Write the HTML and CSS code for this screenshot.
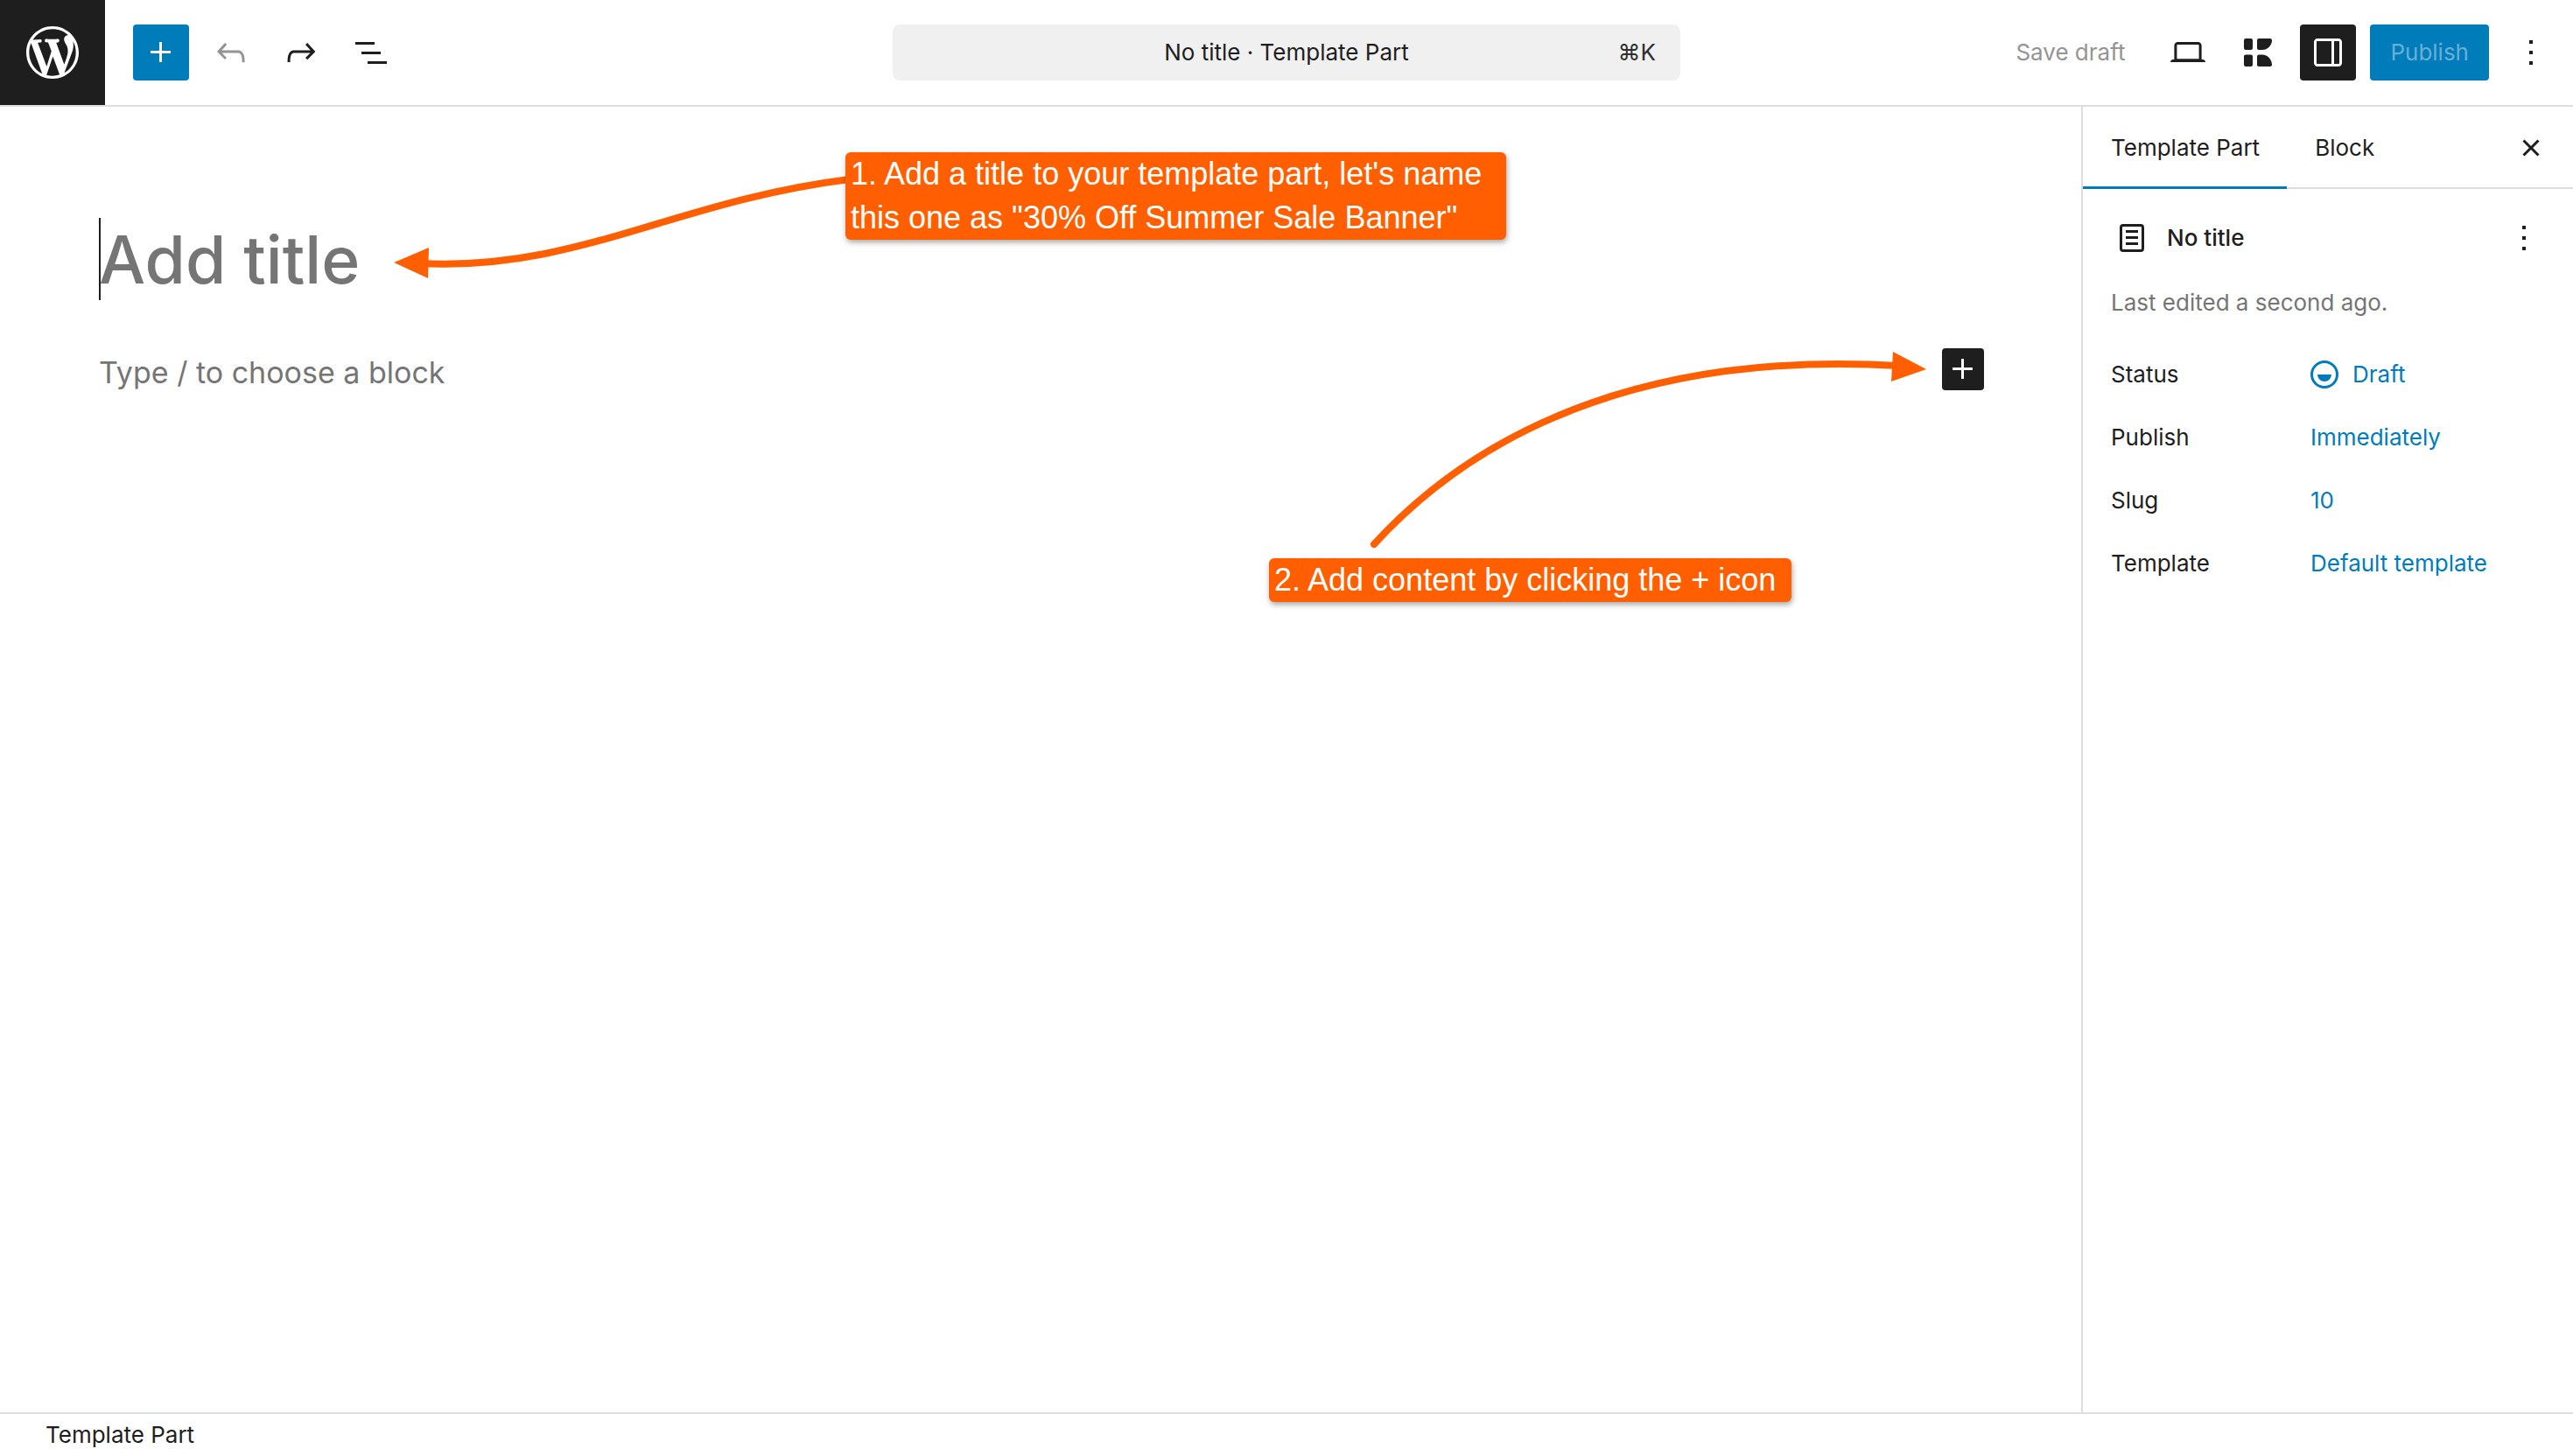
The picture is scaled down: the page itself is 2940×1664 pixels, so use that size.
FILE: index.html
```html
<!DOCTYPE html>
<html lang="en">
<head>
<meta charset="utf-8">
<title>No title · Template Part</title>
<link rel="stylesheet" href="styles.css">
</head>
<body>
<div class="editor">
  <header class="header">
    <div class="tools">
      <a class="logo" href="#" aria-label="View template parts">
        <svg class="logo-icon" viewBox="-2 -2 24 24"><path d="M20 10c0-5.51-4.49-10-10-10C4.48 0 0 4.49 0 10c0 5.52 4.48 10 10 10 5.51 0 10-4.48 10-10zM7.78 15.37L4.37 6.22c.55-.02 1.17-.08 1.17-.08.5-.06.44-1.13-.06-1.11 0 0-1.45.11-2.37.11-.18 0-.37 0-.58-.01C4.12 2.69 6.87 1.11 10 1.11c2.33 0 4.45.87 6.05 2.34-.68-.11-1.65.39-1.65 1.58 0 .74.45 1.36.9 2.1.35.61.55 1.36.55 2.46 0 1.49-1.4 5-1.4 5l-3.03-8.37c.54-.02.82-.17.82-.17.5-.05.44-1.25-.06-1.22 0 0-1.44.12-2.38.12-.87 0-2.33-.12-2.33-.12-.5-.03-.56 1.2-.06 1.22l.92.08 1.26 3.41zM17.41 10c.24-.64.74-1.87.43-4.25.7 1.29 1.05 2.71 1.05 4.25 0 3.29-1.73 6.24-4.4 7.78.97-2.59 1.94-5.2 2.92-7.78zM6.1 18.09C3.12 16.65 1.11 13.53 1.11 10c0-1.3.23-2.48.72-3.59C3.25 10.3 4.67 14.2 6.1 18.09zm4.03-6.63l2.58 6.98c-.86.29-1.76.45-2.71.45-.79 0-1.57-.11-2.29-.33.81-2.38 1.62-4.74 2.42-7.1z"/></svg>
      </a>
      <button class="icon-button primary" aria-label="Add block"><svg class="icon" viewBox="0 0 24 24"><path d="M11 12.5V17.5H12.5V12.5H17.5V11H12.5V6H11V11H6V12.5H11Z"/></svg></button>
      <button class="icon-button muted" aria-label="Undo"><svg class="icon" viewBox="0 0 24 24"><path d="M18.3 11.7c-.6-.6-1.4-.9-2.3-.9H6.7l2.9-3.3-1.1-1-4.5 5L8.5 16l1-1-2.7-2.7H16c.5 0 .9.2 1.3.5 1 1 1 3.4 1 4.5v.3h1.5v-.2c0-1.5 0-4.3-1.5-5.7z"/></svg></button>
      <button class="icon-button" aria-label="Redo"><svg class="icon" viewBox="0 0 24 24"><path d="M15.6 6.5l-1.1 1 2.9 3.3H8c-.9 0-1.7.3-2.3.9-1.4 1.5-1.4 4.2-1.4 5.6v.2h1.5v-.3c0-1.1 0-3.5 1-4.5.3-.3.7-.5 1.3-.5h9.2L14.5 15l1.1 1.1 4.6-4.6-4.6-5z"/></svg></button>
      <button class="icon-button" aria-label="Document overview"><svg class="icon" viewBox="0 0 24 24"><path d="M3 6h11v1.5H3V6Zm3.5 5.5h11V13h-11v-1.5ZM21 17H10v1.5h11V17Z"/></svg></button>
    </div>
    <button class="document-bar">
      <span class="document-name">No title · Template Part</span>
      <span class="shortcut">⌘K</span>
    </button>
    <div class="actions">
      <button class="text-button">Save draft</button>
      <button class="icon-button" aria-label="View"><svg class="icon" viewBox="0 0 24 24"><path d="M20.5 16h-.7V8c0-1.1-.9-2-2-2H6.2c-1.1 0-2 .9-2 2v8h-.7c-.8 0-1.5.7-1.5 1.5h20c0-.8-.7-1.5-1.5-1.5zM5.7 8c0-.3.2-.5.5-.5h11.6c.3 0 .5.2.5.5v7.6H5.7V8z"/></svg></button>
      <button class="icon-button" aria-label="Kadence blocks"><svg class="icon" viewBox="0 0 48 48"><path d="M10 8h6a2 2 0 0 1 2 2v9a2 2 0 0 1-2 2h-6a2 2 0 0 1-2-2v-9a2 2 0 0 1 2-2zM10 26.500h6a2 2 0 0 1 2 2V38a2 2 0 0 1-2 2h-6a2 2 0 0 1-2-2v-9.500a2 2 0 0 1 2-2zM25 8h13a2 2 0 0 1 2 2c0 6-5 11-11 11h-4a2 2 0 0 1-2-2v-9a2 2 0 0 1 2-2zM25 26.500h4c6 0 11 5.500 11 11.500a2 2 0 0 1-2 2H25a2 2 0 0 1-2-2v-9.500a2 2 0 0 1 2-2z"/></svg></button>
      <button class="icon-button pressed" aria-label="Settings"><svg class="icon" viewBox="0 0 24 24"><path d="M18 4H6c-1.1 0-2 .9-2 2v12c0 1.1.9 2 2 2h12c1.1 0 2-.9 2-2V6c0-1.1-.9-2-2-2zm-4 14.5H6c-.3 0-.5-.2-.5-.5V6c0-.3.2-.5.5-.5h8v13zm4.500-.5c0 .3-.2.5-.5.5h-2.500v-13H18c.3 0 .5.2.5.5v12z"/></svg></button>
      <button class="publish">Publish</button>
      <button class="icon-button" aria-label="Options"><svg class="icon" viewBox="0 0 24 24"><path d="M13 19h-2v-2h2v2zm0-6h-2v-2h2v2zm0-6h-2V5h2v2z"/></svg></button>
    </div>
  </header>

  <div class="body">
    <main class="canvas">
      <div class="title-field">
        <input class="title-input" type="text" placeholder="Add title" aria-label="Add title">
      </div>
      <div class="block-row">
        <input class="block-input" type="text" placeholder="Type / to choose a block" aria-label="Empty block">
        <button class="inserter" aria-label="Add block"><svg class="icon" viewBox="0 0 24 24"><path d="M11 12.5V17.5H12.5V12.5H17.5V11H12.5V6H11V11H6V12.5H11Z"/></svg></button>
      </div>
      <svg class="arrows" aria-hidden="true">
        <path class="arrow-line" d="M480 179C660 188 770 108 970 83"/>
        <path class="arrow-head" d="M450 178L490 161L489 196Z"/>
        <path class="arrow-line" d="M1570 500C1700 358 1900 280 2170 296"/>
        <path class="arrow-head" d="M2201 300L2163 280L2161 314Z"/>
      </svg>
      <p class="note note-title">1. Add a title to your template part, let's name<br>this one as "30% Off Summer Sale Banner"</p>
      <p class="note note-content">2. Add content by clicking the + icon</p>
    </main>

    <aside class="sidebar">
      <div class="tabs">
        <div class="tab-list" role="tablist">
          <button class="tab active" role="tab" aria-selected="true">Template Part</button>
          <button class="tab" role="tab" aria-selected="false">Block</button>
        </div>
        <button class="icon-button" aria-label="Close settings"><svg class="icon" viewBox="0 0 24 24"><path d="M12 13.06l3.712 3.713 1.061-1.06L13.061 12l3.712-3.712-1.06-1.06L12 10.938 8.288 7.227l-1.061 1.06L10.939 12l-3.712 3.712 1.06 1.061L12 13.061z"/></svg></button>
      </div>
      <section class="summary">
        <div class="card">
          <svg class="icon" viewBox="0 0 24 24"><path d="M15.500 7.500h-7V9h7V7.500Zm-7 3.500h7v1.500h-7V11Zm7 3.500h-7V16h7v-1.500Z"/><path fill-rule="evenodd" d="M17 4H7a2 2 0 0 0-2 2v12a2 2 0 0 0 2 2h10a2 2 0 0 0 2-2V6a2 2 0 0 0-2-2ZM7 5.500h10a.5.5 0 0 1 .5.5v12a.5.5 0 0 1-.5.5H7a.5.5 0 0 1-.5-.5V6a.5.5 0 0 1 .5-.5Z"/></svg>
          <h2 class="card-title">No title</h2>
          <button class="card-more" aria-label="Actions"><svg class="icon" viewBox="0 0 24 24"><path d="M13 19h-2v-2h2v2zm0-6h-2v-2h2v2zm0-6h-2V5h2v2z"/></svg></button>
        </div>
        <p class="edited">Last edited a second ago.</p>
        <dl class="fields">
          <div class="field"><dt>Status</dt><dd><button class="value"><svg class="status-icon" viewBox="0 0 32 32"><circle cx="16" cy="16" r="14.500" fill="none" stroke="currentColor" stroke-width="3"/><path d="M8 16h16a8 8 0 0 1-16 0z"/></svg>Draft</button></dd></div>
          <div class="field"><dt>Publish</dt><dd><button class="value">Immediately</button></dd></div>
          <div class="field"><dt>Slug</dt><dd><button class="value">10</button></dd></div>
          <div class="field"><dt>Template</dt><dd><button class="value">Default template</button></dd></div>
        </dl>
      </section>
    </aside>
  </div>

  <footer class="footer">Template Part</footer>
</div>
</body>
</html>
```

FILE: styles.css
```css
* { box-sizing: border-box; }

body {
  margin: 0;
  background: #fff;
  color: #1e1e1e;
  font-family: Inter, "Liberation Sans", sans-serif;
  font-size: 26px;
  line-height: 36px;
}

button, input {
  margin: 0;
  padding: 0;
  border: 0;
  background: none;
  color: inherit;
  font: inherit;
}

h2, p, dl, dd { margin: 0; }

.editor {
  display: flex;
  flex-direction: column;
  min-height: 100vh;
}

.icon {
  display: block;
  width: 48px;
  height: 48px;
  fill: currentColor;
}

/* Top bar */
.header {
  display: grid;
  grid-template-columns: 1fr 900px 1fr;
  align-items: center;
  border-bottom: 2px solid #ddd;
}

.tools {
  display: flex;
  align-items: center;
  gap: 16px;
}

.logo {
  display: flex;
  align-items: center;
  justify-content: center;
  width: 120px;
  height: 120px;
  margin-right: 16px;
  background: #1e1e1e;
}

.logo-icon {
  width: 72px;
  height: 72px;
  fill: #fff;
}

.icon-button {
  display: flex;
  align-items: center;
  justify-content: center;
  flex: none;
  width: 64px;
  height: 64px;
  border-radius: 4px;
}

.primary { background: #007cba; color: #fff; }
.muted { color: #949494; }
.pressed { background: #1e1e1e; color: #fff; }

.document-bar {
  display: grid;
  grid-template-columns: 1fr auto 1fr;
  align-items: center;
  height: 64px;
  padding: 0 28px;
  border-radius: 8px;
  background: #f0f0f0;
}

.document-name { grid-column: 2; }
.shortcut { text-align: right; color: #2f2f2f; }

.actions {
  display: flex;
  align-items: center;
  justify-content: flex-end;
  gap: 16px;
  padding-right: 16px;
}

.text-button {
  padding: 0 24px;
  color: #949494;
}

.publish {
  height: 64px;
  padding: 0 23px;
  border-radius: 4px;
  background: #007cba;
  color: #66b0d6;
}

/* Editing area */
.body {
  display: flex;
  flex: 1;
}

.canvas {
  position: relative;
  flex: 1;
  padding: 127px 111px 0 113px;
}

/* The inset shadow is the resting text cursor */
.title-field {
  height: 94px;
  box-shadow: inset 2px 0 #1e1e1e;
}

.title-input {
  width: 100%;
  height: 100%;
  font-size: 75px;
  font-weight: 500;
  line-height: 94px;
}

.title-input::placeholder,
.block-input::placeholder {
  color: #757575;
  opacity: 1;
}

.block-row {
  display: flex;
  align-items: flex-start;
  margin-top: 55px;
}

.block-input {
  flex: 1;
  height: 54px;
  font-size: 34px;
}

.inserter {
  border-radius: 4px;
  background: #1e1e1e;
  color: #fff;
}

/* Callouts over the canvas */
.arrows {
  position: absolute;
  top: 0;
  left: 0;
  width: 100%;
  height: 100%;
  pointer-events: none;
}

.arrow-line {
  fill: none;
  stroke: #ff5f00;
  stroke-width: 8px;
  stroke-linecap: round;
}

.arrow-head { fill: #ff5f00; }

.note {
  position: absolute;
  padding: 0 6px;
  border-radius: 6px;
  background: #ff5f00;
  box-shadow: 1px 3px 6px rgba(0, 0, 0, 0.35);
  color: #fff;
  font-family: "Liberation Sans", Arial, sans-serif;
  font-size: 36px;
  line-height: 50px;
  white-space: nowrap;
}

.note-title { top: 52px; left: 966px; width: 755px; }
.note-content { top: 516px; left: 1450px; width: 597px; }

/* Settings sidebar */
.sidebar {
  width: 562px;
  border-left: 2px solid #ddd;
}

.tabs {
  display: flex;
  align-items: center;
  justify-content: space-between;
  height: 94px;
  padding-right: 16px;
  box-shadow: inset 0 -2px #ddd;
}

.tab-list {
  display: flex;
  align-self: stretch;
}

.tab { padding: 0 31px 0 32px; }
.active { box-shadow: inset 0 -3px #007cba; }

.summary { padding: 32px; }

.card {
  display: flex;
  align-items: center;
  gap: 16px;
}

.card-title {
  flex: 1;
  font-size: 26px;
  font-weight: 500;
}

.edited {
  margin-top: 32px;
  color: #757575;
}

.fields {
  display: flex;
  flex-direction: column;
  gap: 8px;
  margin-top: 32px;
}

.field {
  display: grid;
  grid-template-columns: 228px 1fr;
  align-items: center;
  height: 64px;
}

.value {
  display: flex;
  align-items: center;
  gap: 16px;
  color: #007cba;
}

.status-icon {
  width: 32px;
  height: 32px;
  fill: currentColor;
}

.footer {
  padding: 6px 52px;
  border-top: 2px solid #ddd;
}
```
